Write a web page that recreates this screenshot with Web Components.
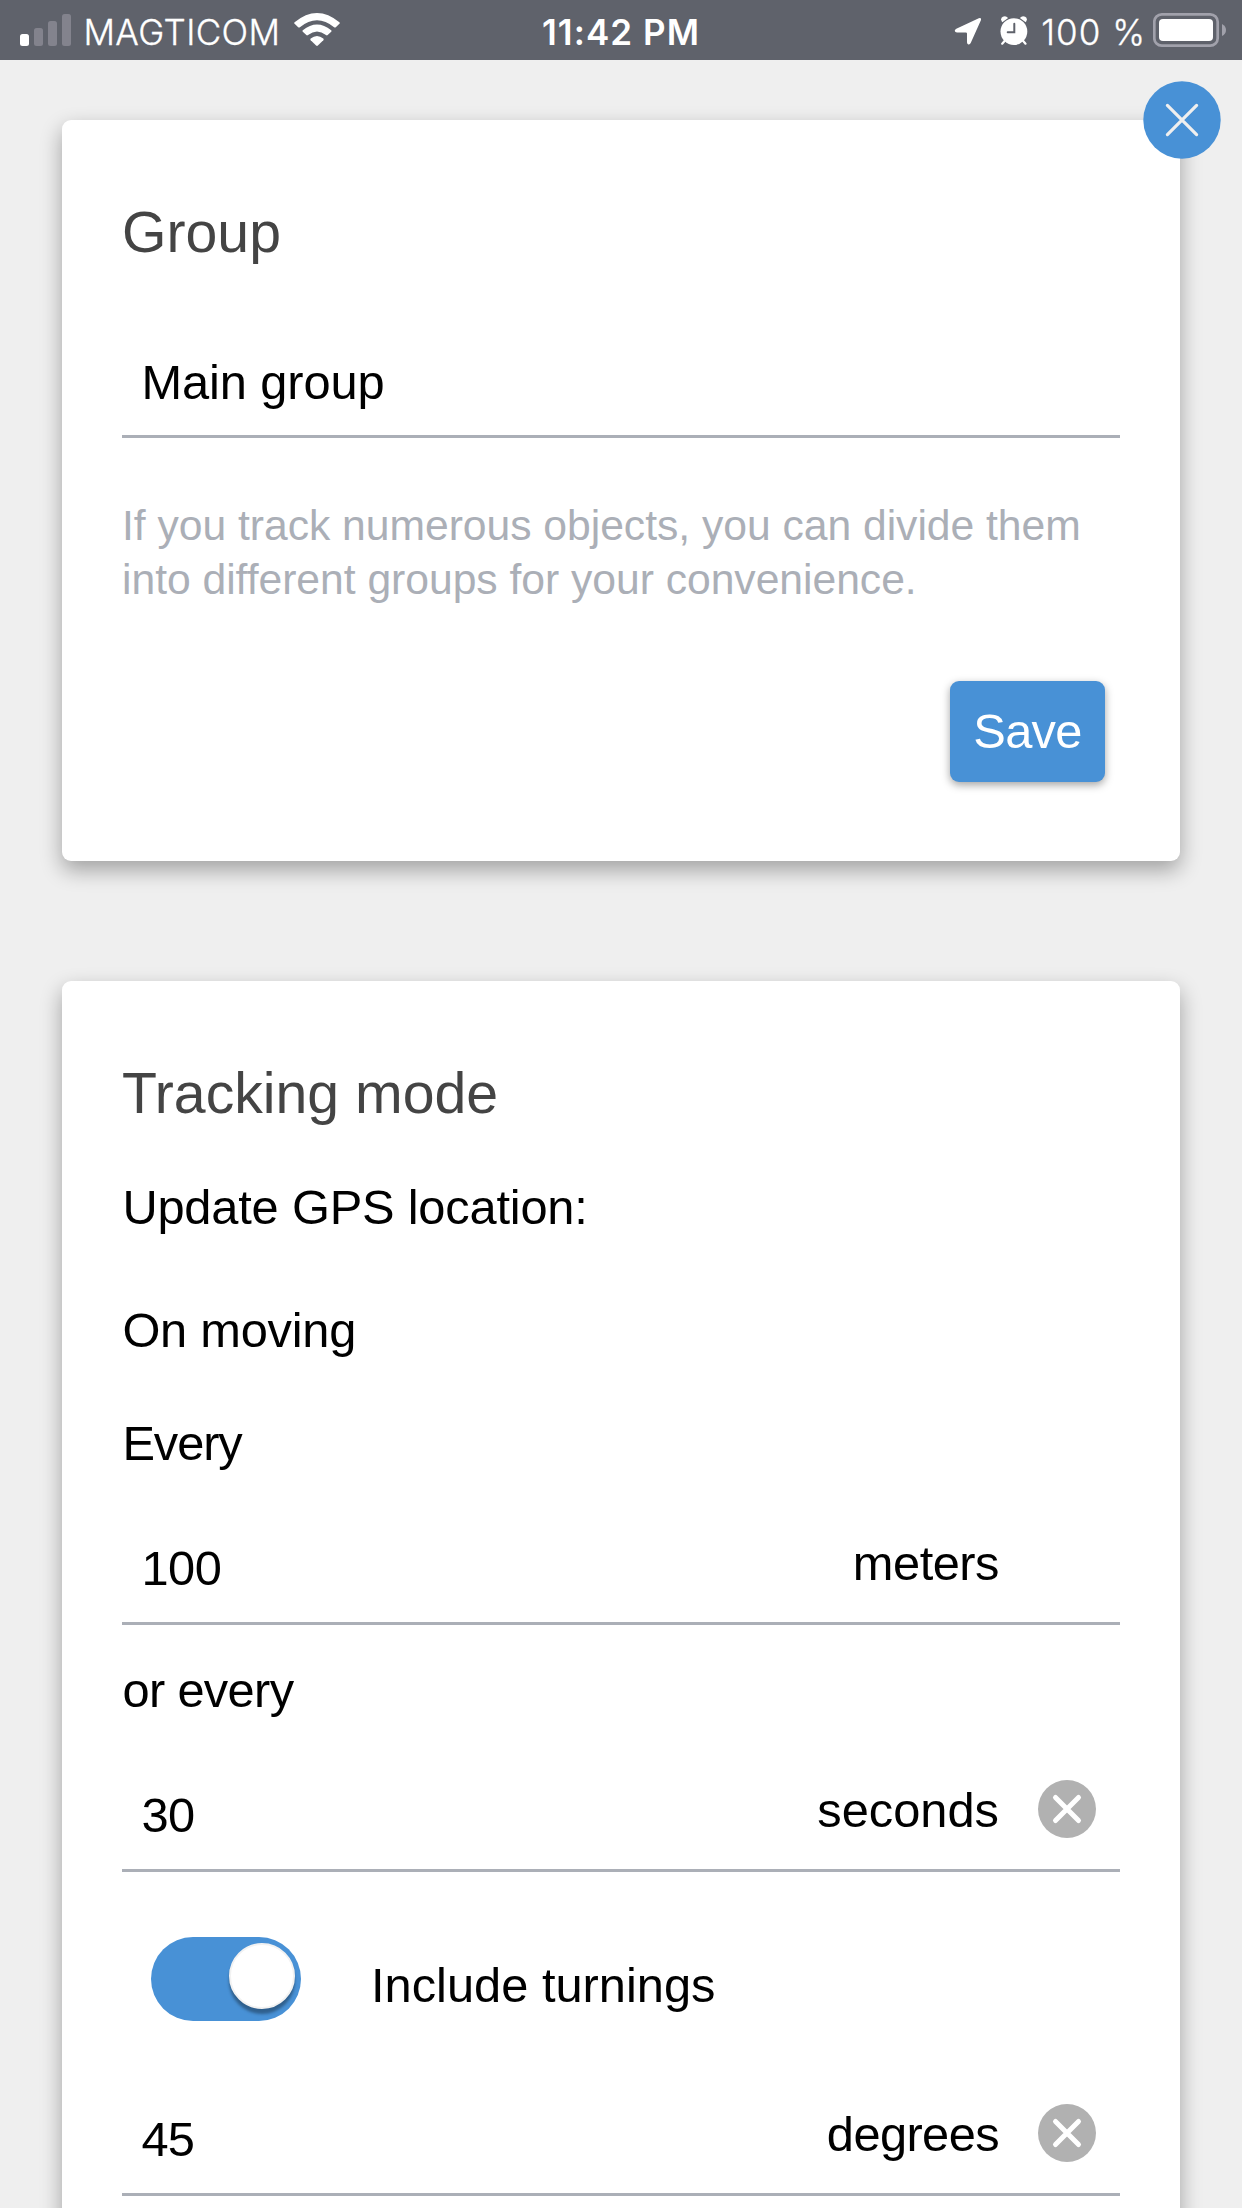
<!DOCTYPE html>
<html lang="en">
<head>
<meta charset="utf-8">
<title>Object settings</title>
<style>
  html, body { margin: 0; height: 2208px; overflow: hidden; background: #efefef; }
  body { font-family: "Liberation Sans", Arial, sans-serif; font-size: 48.8px; line-height: 60px; color: #000; }
</style>
</head>
<body>
<settings-screen>
  <status-bar slot="status" carrier="MAGTICOM" time="11:42 PM" battery="100 %"></status-bar>
  <settings-card heading="Group" closable>
    <value-field style="margin-top:87px;--drop:23px;--track:-.1px">Main group</value-field>
    <hint-text>If you track numerous objects, you can divide them into different groups for your convenience.</hint-text>
    <action-button>Save</action-button>
  </settings-card>
  <settings-card heading="Tracking mode">
    <text-row style="margin-top:51px;letter-spacing:-.2px">Update GPS location:</text-row>
    <text-row style="margin-top:63px;letter-spacing:-.25px">On moving</text-row>
    <text-row style="margin-top:53px;letter-spacing:-1.1px">Every</text-row>
    <value-field unit="meters" style="margin-top:65px;--track:-.5px;--unit-track:-.5px">100</value-field>
    <text-row style="margin-top:35px;letter-spacing:-.65px">or every</text-row>
    <value-field unit="seconds" clearable style="margin-top:65px;--track:-.6px">30</value-field>
    <toggle-row>Include turnings</toggle-row>
    <value-field unit="degrees" clearable style="margin-top:88px;--track:-.8px;--unit-track:-.6px">45</value-field>
  </settings-card>
</settings-screen>

<script>
const define = (name, render) => customElements.define(name, class extends HTMLElement {
  connectedCallback() {
    if (this.shadowRoot) return;
    this.attachShadow({ mode: 'open' }).innerHTML = render(this);
  }
});

define('settings-screen', () => `
  <style>
    :host { display: flex; flex-direction: column; height: 2208px; overflow: hidden; }
    main { display: flex; flex-direction: column; gap: 120px; padding: 60px 62px; }
  </style>
  <slot name="status"></slot>
  <main><slot></slot></main>`);

define('status-bar', el => `
  <style>
    :host { display: grid; grid-template-columns: 1fr auto 1fr; align-items: center; height: 60px; flex: none;
      background: #5f626b; color: #fff; font-family: Inter, sans-serif; font-size: 35px; line-height: 60px; white-space: pre; }
    div { display: flex; align-items: center; height: 60px; }
    span { padding-top: 2px; height: 60px; box-sizing: border-box; }
    svg { display: block; flex: none; }
    .left { padding-left: 20px; }
    .carrier { margin-left: 12.5px; font-weight: 300; letter-spacing: .35px; -webkit-text-stroke: .3px #fff; }
    .time { font-weight: 600; letter-spacing: 1.05px; }
    .right { justify-content: flex-end; padding-right: 15px; }
    .pct { font-weight: 300; letter-spacing: 1px; -webkit-text-stroke: .3px #fff; margin: 0 7px 0 13px; }
  </style>
  <div class="left">
    <svg width="51" height="60" viewBox="20 0 51 60"><rect x="20" y="34" width="9" height="12" rx="2.5" fill="#fff"/>
      <g fill="#83838d"><rect x="34" y="28" width="9" height="18" rx="2.5"/><rect x="48" y="21" width="9" height="25" rx="2.5"/><rect x="62" y="14" width="9" height="32" rx="2.5"/></g></svg>
    <span class="carrier">${el.getAttribute('carrier')}</span>
    <svg style="margin-left:14px" width="46" height="60" viewBox="294 0 46 60" fill="#fff">
      <path d="M294.6 22.2Q317 3.6 339.4 22.2Q340.3 23 339.4 23.8L335.8 27.2Q335 27.9 334.1 27.2Q317 13.3 299.9 27.2Q299 27.9 298.2 27.2L294.6 23.8Q293.7 23 294.6 22.2Z"/>
      <path d="M302.8 30.2Q317 18.8 331.2 30.2Q332.1 31 331.2 31.8L327.7 35.1Q326.9 35.8 326 35.1Q317 28.1 308 35.1Q307.1 35.8 306.3 35.1L302.8 31.8Q301.9 31 302.8 30.2Z"/>
      <path d="M310.7 38.5Q317 33.5 323.3 38.5Q324.2 39.3 323.3 40.2L317.9 45.5Q317 46.3 316.1 45.5L310.7 40.2Q309.8 39.3 310.7 38.5Z"/></svg>
  </div>
  <span class="time">${el.getAttribute('time')}</span>
  <div class="right">
    <svg width="27" height="60" viewBox="954 0 27 60" fill="#fff"><path d="M978.8 18.2Q981.6 17.3 980.9 20.2L970.7 43Q969.7 45 968 44.2Q967 43.7 967 42.2V33.6Q967 32.4 965.8 32.4H957Q955 32.4 954.8 31Q954.6 29.6 956.3 28.7Z"/></svg>
    <svg style="margin-left:19px" width="28" height="60" viewBox="999.5 0 28 60" fill="#fff">
      <path d="M1001.8 22.3Q999.3 18.3 1002.3 16.7Q1005.3 15.2 1007.6 18Z"/><path d="M1025.2 22.3Q1027.7 18.3 1024.7 16.7Q1021.7 15.2 1019.4 18Z"/>
      <path d="M1004.5 40.5L1001.7 43.7M1022.3 40.5L1025 43.7" stroke="#fff" stroke-width="2.2" stroke-linecap="round"/>
      <circle cx="1013.4" cy="31.6" r="13.4"/><path d="M1013.8 23.8V32.2H1007.2" fill="none" stroke="#5f626b" stroke-width="2" stroke-linecap="round"/></svg>
    <span class="pct">${el.getAttribute('battery')}</span>
    <svg width="74" height="60" viewBox="1153 0 74 60"><rect x="1154.3" y="14.3" width="63.4" height="31.4" rx="7.5" fill="none" stroke="#a1a1ab" stroke-width="2.7"/>
      <rect x="1159" y="19" width="54" height="22" rx="4" fill="#fff"/><path d="M1222 24Q1226 26 1226 30Q1226 34 1222 36Z" fill="#a1a1ab"/></svg>
  </div>`);

define('settings-card', el => `
  <style>
    :host { display: flex; flex-direction: column; flex: none; position: relative; padding: 79px 60px; border-radius: 9px;
      background: #fff; box-shadow: 0 9px 21px rgba(0,0,0,.33); }
    h2 { margin: 0; height: 66px; font-size: 57.2px; line-height: 66px; font-weight: 400; color: #444; }
    close-badge { position: absolute; top: -39px; right: -41px; }
  </style>
  <h2>${el.getAttribute('heading')}</h2>
  <slot></slot>
  ${el.hasAttribute('closable') ? '<close-badge></close-badge>' : ''}`);

define('close-badge', () => `
  <style>:host { display: block; } svg { display: block; }</style>
  <svg width="78" height="78" viewBox="-39 -39 78 78"><circle r="38.7" fill="#4891d6"/>
    <path d="M-14.6 -14.6L14.6 14.6M14.6 -14.6L-14.6 14.6" stroke="#efefef" stroke-width="3.2" stroke-linecap="round"/></svg>`);

define('text-row', () => `
  <style>:host { display: block; height: 60px; line-height: 61px; text-indent: .4px; }</style><slot></slot>`);

define('value-field', el => `
  <style>
    :host { display: flex; align-items: flex-start; height: 60px; line-height: 61px; padding: 0 0 var(--drop, 24px) 19.4px; border-bottom: 3px solid #abafb7; }
    .value { flex: 1; letter-spacing: var(--track, 0); }
    .unit { margin: -5px 39px 0 0; letter-spacing: var(--unit-track, 0); }
    .end { display: block; width: 58px; height: 58px; margin: -5px 24px 0 0; }
  </style>
  <span class="value"><slot></slot></span>
  ${el.hasAttribute('unit') ? `<span class="unit">${el.getAttribute('unit')}</span>
  <svg class="end" viewBox="-29 -29 58 58">${el.hasAttribute('clearable') ? `<circle r="29" fill="#b1b1b1"/>
    <path d="M-11.5 -11.5L11.5 11.5M11.5 -11.5L-11.5 11.5" stroke="#fff" stroke-width="5" stroke-linecap="round"/>` : ''}</svg>` : ''}`);

define('hint-text', () => `
  <style>:host { display: block; margin-top: 60px; font-size: 42.67px; line-height: 54px; color: #abafb7; letter-spacing: -.03px; }</style><slot></slot>`);

define('action-button', () => `
  <style>
    :host { display: flex; justify-content: flex-end; margin: 75px 15px 0 0; }
    button { all: unset; width: 155px; height: 101px; line-height: 101px; letter-spacing: -.7px; text-align: center; color: #fff; border-radius: 9px;
      background: #4891d6; box-shadow: 0 3px 8px rgba(0,0,0,.36); }
  </style>
  <button><slot></slot></button>`);

define('toggle-row', () => `
  <style>
    :host { display: flex; align-items: flex-start; margin-top: 65px; padding-left: 29px; gap: 70px; }
    .track { box-sizing: border-box; display: flex; justify-content: flex-end; width: 150px; height: 84px; padding: 6px; border-radius: 42px; background: #4891d6; }
    .knob { box-sizing: border-box; width: 66px; height: 66px; border-radius: 50%; background: #fff; border: 2.5px solid #f2f2f2; box-shadow: 0 5px 3px rgba(0,0,0,.34); }
    .label { margin-top: 18px; }
  </style>
  <span class="track"><span class="knob"></span></span>
  <span class="label"><slot></slot></span>`);
</script>
</body>
</html>
